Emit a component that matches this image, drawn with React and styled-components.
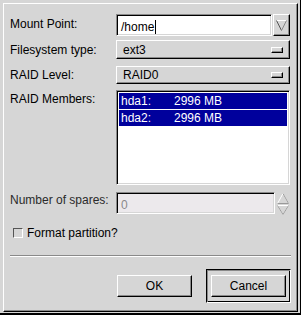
import React from 'react'
import styled, { createGlobalStyle } from 'styled-components'

const GlobalStyle = createGlobalStyle`
  html, body {
    margin: 0;
    padding: 0;
    background: #d6d6d6;
  }
  * {
    box-sizing: border-box;
  }
`

const Window = styled.div`
  width: 301px;
  height: 315px;
  background: #d6d6d6;
  padding: 3px 1px 1px 3px;
  font-family: "Liberation Sans", Arial, sans-serif;
  font-size: 12px;
  color: #000;
  border-right: 1px solid #000;
  border-bottom: 2px solid #000;
`

const Frame = styled.div`
  width: 295px;
  height: 309px;
  border-top: 1px solid #fff;
  border-left: 1px solid #fff;
  border-right: 1px solid #000;
  border-bottom: 1px solid #000;
  box-shadow: inset -1px -1px #8a8a8a;
  padding: 10px 6px 0 6px;
  display: flex;
  flex-direction: column;
`

const Row = styled.div`
  display: grid;
  grid-template-columns: 106px 174px;
  align-items: start;
  margin-top: ${p => p.$mt || 0}px;
`

const Label = styled.div`
  line-height: 14px;
  padding-top: ${p => p.$pt || 0}px;
  color: ${p => (p.$dim ? '#2a2a2a' : '#000')};
  white-space: nowrap;
`

const Combo = styled.div`
  display: flex;
  height: 22px;
`

const Entry = styled.div`
  flex: 1;
  height: 22px;
  background: ${p => (p.$disabled ? '#ece9ec' : '#fff')};
  border-top: 1px solid #8a8a8a;
  border-left: 1px solid #8a8a8a;
  border-right: 1px solid #fff;
  border-bottom: 1px solid #fff;
  box-shadow: inset 1px 1px #000, inset -1px -1px #d6d6d6;
  padding: 3px 0 0 4px;
  line-height: 14px;
  color: ${p => (p.$disabled ? '#8a8a8a' : '#000')};
  display: flex;
  align-items: center;
`

const Cursor = styled.span`
  display: inline-block;
  width: 1px;
  height: 14px;
  background: #000;
  margin-left: 1px;
`

const ArrowButton = styled.div`
  width: 17px;
  height: 22px;
  margin-left: 1px;
  border-top: 1px solid #fff;
  border-left: 1px solid #fff;
  border-right: 1px solid #000;
  border-bottom: 1px solid #000;
  box-shadow: inset -1px -1px #8a8a8a;
  display: flex;
  align-items: center;
  justify-content: center;
`

const OptionMenu = styled.div`
  height: ${p => p.$h}px;
  border-top: 1px solid #fff;
  border-left: 1px solid #fff;
  border-right: 1px solid #000;
  border-bottom: 1px solid #000;
  box-shadow: inset -1px -1px #8a8a8a;
  display: flex;
  align-items: center;
  justify-content: space-between;
  padding: 0 6px 0 6px;
  line-height: 14px;
`

const Indicator = styled.div`
  width: 12px;
  height: 6px;
  border-top: 1px solid #fff;
  border-left: 1px solid #fff;
  border-right: 1px solid #000;
  border-bottom: 1px solid #000;
  box-shadow: inset -1px -1px #8a8a8a;
`

const ListBox = styled.div`
  height: 95px;
  background: #fff;
  border-top: 1px solid #8a8a8a;
  border-left: 1px solid #8a8a8a;
  border-right: 1px solid #fff;
  border-bottom: 1px solid #fff;
  box-shadow: inset 1px 1px #000, inset -1px -1px #d6d6d6;
  padding: 2px 2px 0 2px;
  display: flex;
  flex-direction: column;
  gap: 1px;
`

const ListRow = styled.div`
  display: flex;
  height: 16px;
  align-items: center;
  background: ${p => (p.$selected ? '#00009c' : 'transparent')};
  color: ${p => (p.$selected ? '#fff' : '#000')};
  padding-left: 2px;
`

const Cell = styled.span`
  width: ${p => p.$w}px;
`

const Spin = styled.div`
  display: flex;
  height: 24px;
`

const SpinArrows = styled.div`
  width: 15px;
  display: flex;
  align-items: center;
  justify-content: center;
`

const CheckRow = styled.div`
  display: flex;
  align-items: center;
  margin-top: 10px;
  padding-left: 3px;
  line-height: 14px;
`

const CheckBox = styled.div`
  width: 10px;
  height: 10px;
  background: #d6d6d6;
  border-top: 1px solid #555;
  border-left: 1px solid #555;
  border-right: 1px solid #fff;
  border-bottom: 1px solid #fff;
  margin-right: 4px;
`

const Separator = styled.div`
  height: 2px;
  margin-top: 15px;
  border-top: 1px solid #8a8a8a;
  border-bottom: 1px solid #fff;
`

const ButtonBar = styled.div`
  display: flex;
  justify-content: flex-end;
  align-items: center;
  margin-top: 12px;
  gap: 14px;
`

const Button = styled.div`
  width: 75px;
  height: 22px;
  border-top: 1px solid #fff;
  border-left: 1px solid #fff;
  border-right: 1px solid #000;
  border-bottom: 1px solid #000;
  box-shadow: inset -1px -1px #8a8a8a;
  display: flex;
  align-items: center;
  justify-content: center;
  line-height: 14px;
`

const DefaultFrame = styled.div`
  padding: 5px 4px;
  border-top: 1px solid #000;
  border-left: 1px solid #000;
  border-right: 1px solid #fff;
  border-bottom: 1px solid #fff;
  box-shadow: inset 1px 1px #8a8a8a, inset -1px -1px #000;
`

const DownArrow = () => (
  <svg width="11" height="11" viewBox="0 0 11 11">
    <path d="M0.5 0.5 L10.5 0.5" stroke="#fff" />
    <path d="M0.5 0.5 L5.5 10.5" stroke="#555" />
    <path d="M10.5 0.5 L5.5 10.5" stroke="#8a8a8a" />
  </svg>
)

const SpinGlyphs = () => (
  <svg width="12" height="22" viewBox="0 0 12 22">
    <path d="M6 0.5 L0.5 10.5 L11.5 10.5 Z" fill="none" stroke="#fff" />
    <path d="M6 0.5 L11.5 10.5 L0.5 10.5" fill="none" stroke="#9a9a9a" />
    <path d="M0.5 12.5 L11.5 12.5 L6 21.5 Z" fill="none" stroke="#fff" />
    <path d="M0.5 12.5 L6 21.5 L11.5 12.5" fill="none" stroke="#9a9a9a" />
  </svg>
)

export default function App() {
  const members = [
    { dev: 'hda1:', size: '2996 MB' },
    { dev: 'hda2:', size: '2996 MB' },
  ]
  return (
    <>
      <GlobalStyle />
      <Window>
        <Frame>
          <Row>
            <Label $pt={3}>Mount Point:</Label>
            <Combo>
              <Entry>
                /home<Cursor />
              </Entry>
              <ArrowButton>
                <DownArrow />
              </ArrowButton>
            </Combo>
          </Row>
          <Row $mt={4}>
            <Label $pt={3}>Filesystem type:</Label>
            <OptionMenu $h={19}>
              ext3
              <Indicator />
            </OptionMenu>
          </Row>
          <Row $mt={7}>
            <Label $pt={2}>RAID Level:</Label>
            <OptionMenu $h={18}>
              RAID0
              <Indicator />
            </OptionMenu>
          </Row>
          <Row $mt={6}>
            <Label $pt={2}>RAID Members:</Label>
            <ListBox>
              {members.map(m => (
                <ListRow key={m.dev} $selected>
                  <Cell $w={53}>{m.dev}</Cell>
                  <Cell $w={80}>{m.size}</Cell>
                </ListRow>
              ))}
            </ListBox>
          </Row>
          <Row $mt={7}>
            <Label $pt={1} $dim>Number of spares:</Label>
            <Spin>
              <Entry $disabled>0</Entry>
              <SpinArrows>
                <SpinGlyphs />
              </SpinArrows>
            </Spin>
          </Row>
          <CheckRow>
            <CheckBox />
            Format partition?
          </CheckRow>
          <Separator />
          <ButtonBar>
            <Button>OK</Button>
            <DefaultFrame>
              <Button>Cancel</Button>
            </DefaultFrame>
          </ButtonBar>
        </Frame>
      </Window>
    </>
  )
}
